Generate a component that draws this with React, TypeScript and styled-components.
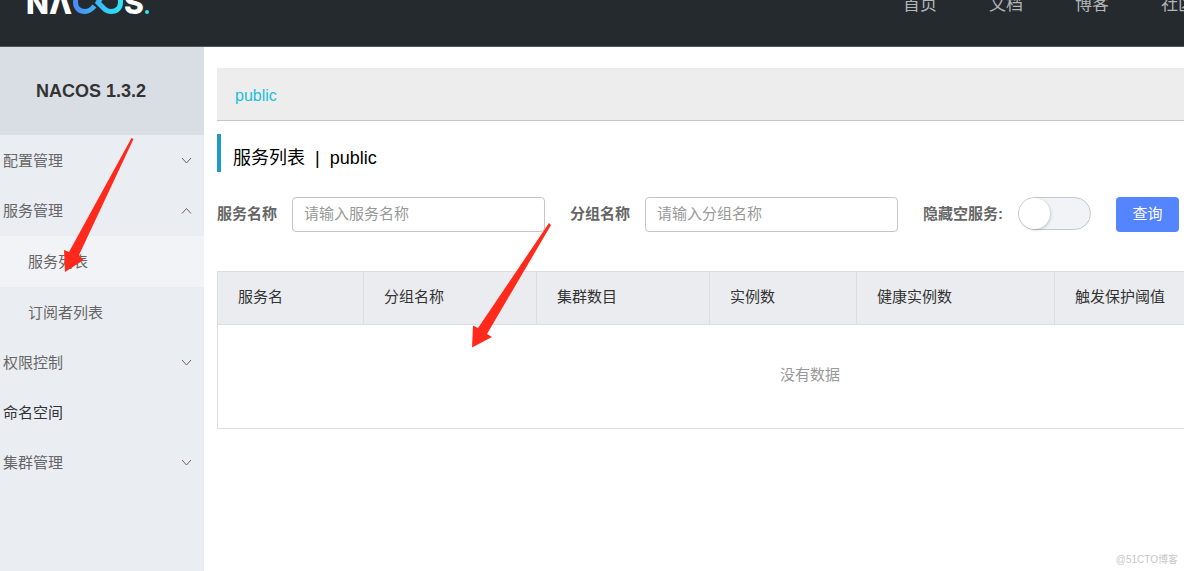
import React from "react";
import styled, { createGlobalStyle } from "styled-components";

const GlobalStyle = createGlobalStyle`
  * { box-sizing: border-box; }
  html, body { margin: 0; background: #fff; }
  body {
    font-family: "Liberation Sans", "Noto Sans CJK SC", sans-serif;
    font-size: 15px;
    color: #333;
    overflow: hidden;
  }
  button, input { font: inherit; }
`;

const Page = styled.div`
  position: relative;
  display: flex;
  flex-direction: column;
  min-height: 100vh;
  overflow: hidden;
`;

const Header = styled.header`
  display: flex;
  justify-content: space-between;
  align-items: flex-start;
  height: 47px;
  padding-left: 26px;
  background: #252a2f;
  border-bottom: 1px solid #50565a;
  overflow: hidden;
`;

const Nav = styled.nav`
  display: flex;
  gap: 52px;
  width: 281px;
  flex: none;
`;

const NavLink = styled.a`
  flex: none;
  font-size: 17px;
  line-height: 10px;
  color: #b3b5b7;
  text-decoration: none;
  white-space: nowrap;
`;

const Body = styled.div`
  display: flex;
  flex: 1;
`;

const Sidebar = styled.aside`
  flex: none;
  width: 204px;
  background: #eaedf2;
`;

const Product = styled.h1`
  margin: 0;
  height: 88px;
  padding-right: 22px;
  font-size: 18px;
  font-weight: 700;
  line-height: 88px;
  text-align: center;
  color: #333;
  background: #d9dde4;
`;

const Menu = styled.ul`
  margin: 0;
  padding: 1px 0 0;
  list-style: none;
`;

const MenuButton = styled.button<{ $dark?: boolean }>`
  display: flex;
  align-items: center;
  justify-content: space-between;
  width: 100%;
  height: 50px;
  padding: 0 12px 0 3px;
  border: 0;
  background: transparent;
  line-height: 48px;
  color: ${(p) => (p.$dark ? "#333" : "#666")};
  cursor: pointer;
`;

const SubMenu = styled.ul`
  margin: 0;
  padding: 0;
  list-style: none;
`;

const SubLink = styled.a<{ $active?: boolean }>`
  display: block;
  padding-left: 28px;
  line-height: 51px;
  color: #666;
  text-decoration: none;
  background: ${(p) => (p.$active ? "#f2f3f7" : "transparent")};
`;

const Main = styled.main`
  flex: 1;
  min-width: 0;
  padding: 21px 0 0 13px;
`;

const NamespaceBar = styled.div`
  height: 53px;
  padding-left: 18px;
  font-size: 16px;
  line-height: 56px;
  background: #ededed;
  border-bottom: 1px solid #c7c7c7;
`;

const NamespaceLink = styled.a`
  color: #1cbddb;
  text-decoration: none;
`;

const Title = styled.h2`
  margin: 13px 0 25px;
  height: 38px;
  padding-left: 12px;
  border-left: 4px solid #209bc7;
  font-size: 18px;
  font-weight: 400;
  line-height: 48px;
  color: #000;
  white-space: pre;
`;

const Form = styled.form`
  display: flex;
  align-items: center;
  margin-bottom: 39px;
`;

const Label = styled.label`
  flex: none;
  margin-right: 15px;
  padding-bottom: 4px;
  font-weight: 700;
  color: #666;
`;

const TextBox = styled.input`
  flex: none;
  width: 253px;
  height: 35px;
  margin-right: 25px;
  padding: 0 11px 2px;
  border: 1px solid #c4c6cf;
  border-radius: 4px;
  background: #fff;
  outline: none;
  &::placeholder { color: #999; opacity: 1; }
`;

const Switch = styled.input`
  appearance: none;
  flex: none;
  display: flex;
  width: 73px;
  height: 33px;
  margin: 0 25px 2px 0;
  border: 1px solid #c4c6cf;
  border-radius: 17px;
  background: #f2f3f7;
  &::before {
    content: "";
    width: 31px;
    height: 31px;
    border-radius: 50%;
    background: #fff;
    box-shadow: 1px 1px 3px rgba(0, 0, 0, 0.18);
  }
  &:checked { justify-content: flex-end; }
`;

const SearchButton = styled.button`
  flex: none;
  width: 63px;
  height: 35px;
  padding: 0 0 4px;
  border: 0;
  border-radius: 4px;
  background: #5584ff;
  color: #fff;
`;

const TableFrame = styled.div`
  overflow: hidden;
`;

const Table = styled.table`
  table-layout: fixed;
  width: 1187px;
  border-collapse: collapse;
  border: 1px solid #dcdee3;
`;

const HeadCell = styled.th`
  height: 53px;
  padding: 0 20px 5px;
  border: 1px solid #dcdee3;
  background: #ebecf0;
  font-weight: 400;
  text-align: left;
  color: #333;
`;

const EmptyCell = styled.td`
  height: 104px;
  padding: 0 2px 6px 0;
  text-align: center;
  color: #999;
`;

const Watermark = styled.span`
  position: absolute;
  right: 6px;
  bottom: 3px;
  font-size: 10px;
  line-height: 16px;
  color: #c8c8c8;
`;

const Arrow = styled.svg<{ $x: number; $y: number }>`
  position: absolute;
  left: ${(p) => p.$x}px;
  top: ${(p) => p.$y}px;
  pointer-events: none;
`;

const Logo = () => (
  <svg width="126" height="16" viewBox="26 0 126 16" role="img" aria-label="NACOS">
    <defs>
      <linearGradient id="loop" gradientUnits="userSpaceOnUse" x1="72" y1="0" x2="123" y2="0">
        <stop offset="0" stopColor="#4a86f7" />
        <stop offset="1" stopColor="#2ce8f5" />
      </linearGradient>
    </defs>
    <g fill="#fff" fontFamily="Inter, sans-serif" fontWeight="800" fontSize="30">
      <text x="26" y="14">N</text>
      <text x="49" y="14">Λ</text>
      <text x="124" y="14">S</text>
    </g>
    <g fill="none" stroke="url(#loop)" strokeWidth="5">
      <path d="M94.500 6C92 9 89 11.500 85 11.500C79 11.500 75.500 8 75.500 2C75.500 -4 79 -8 85 -8C89 -8 92 -5 95 -2" />
      <path d="M103 -6L98 2.500L104 8.500C106 10.500 108 11.500 111 11.500C117 11.500 120.500 8 120.500 2C120.500 -4 117 -8 111 -8" />
    </g>
    <circle cx="147" cy="12" r="2" fill="#2ce8f5" />
  </svg>
);

const Chevron = ({ up }: { up?: boolean }) => (
  <svg width="11" height="8" viewBox="0 0 11 8" fill="none" stroke="#666" aria-hidden="true">
    <path d={up ? "M1 6.500L5.500 1.500L10 6.500" : "M1 1L5.500 6L10 1"} />
  </svg>
);

const columns: [string, number][] = [
  ["服务名", 146],
  ["分组名称", 173],
  ["集群数目", 173],
  ["实例数", 147],
  ["健康实例数", 198],
  ["触发保护阈值", 198],
  ["操作", 152],
];

export default function App() {
  return (
    <Page>
      <GlobalStyle />
      <Header>
        <Logo />
        <Nav>
          {["首页", "文档", "博客", "社区"].map((t) => (
            <NavLink href="#" key={t}>{t}</NavLink>
          ))}
        </Nav>
      </Header>
      <Body>
        <Sidebar>
          <Product>NACOS 1.3.2</Product>
          <Menu>
            <li><MenuButton>配置管理<Chevron /></MenuButton></li>
            <li>
              <MenuButton>服务管理<Chevron up /></MenuButton>
              <SubMenu>
                <li><SubLink href="#" $active>服务列表</SubLink></li>
                <li><SubLink href="#">订阅者列表</SubLink></li>
              </SubMenu>
            </li>
            <li><MenuButton>权限控制<Chevron /></MenuButton></li>
            <li><MenuButton $dark>命名空间</MenuButton></li>
            <li><MenuButton>集群管理<Chevron /></MenuButton></li>
          </Menu>
        </Sidebar>
        <Main>
          <NamespaceBar><NamespaceLink href="#">public</NamespaceLink></NamespaceBar>
          <Title>{"服务列表  |  public"}</Title>
          <Form onSubmit={(e) => e.preventDefault()}>
            <Label htmlFor="service">服务名称</Label>
            <TextBox id="service" placeholder="请输入服务名称" />
            <Label htmlFor="group">分组名称</Label>
            <TextBox id="group" placeholder="请输入分组名称" />
            <Label htmlFor="hide">隐藏空服务:</Label>
            <Switch id="hide" type="checkbox" />
            <SearchButton type="submit">查询</SearchButton>
          </Form>
          <TableFrame>
            <Table>
              <colgroup>
                {columns.map(([name, width]) => <col key={name} width={width} />)}
              </colgroup>
              <thead>
                <tr>{columns.map(([name]) => <HeadCell key={name}>{name}</HeadCell>)}</tr>
              </thead>
              <tbody>
                <tr><EmptyCell colSpan={columns.length}>没有数据</EmptyCell></tr>
              </tbody>
            </Table>
          </TableFrame>
        </Main>
      </Body>
      <Watermark>@51CTO博客</Watermark>
      <Arrow $x={60} $y={136} width="76" height="138" viewBox="60 136 76 138" aria-hidden="true">
        <path d="M131.500 138L133.500 139L79 255L83.500 260L65 272L64 250L69 252Z" fill="#ff2a1c" />
      </Arrow>
      <Arrow $x={468} $y={220} width="86" height="130" viewBox="468 220 86 130" aria-hidden="true">
        <path d="M549 223L551 225L487 334L492 337L472 347.500L473 325.500L478 328Z" fill="#ff2a1c" />
      </Arrow>
    </Page>
  );
}
